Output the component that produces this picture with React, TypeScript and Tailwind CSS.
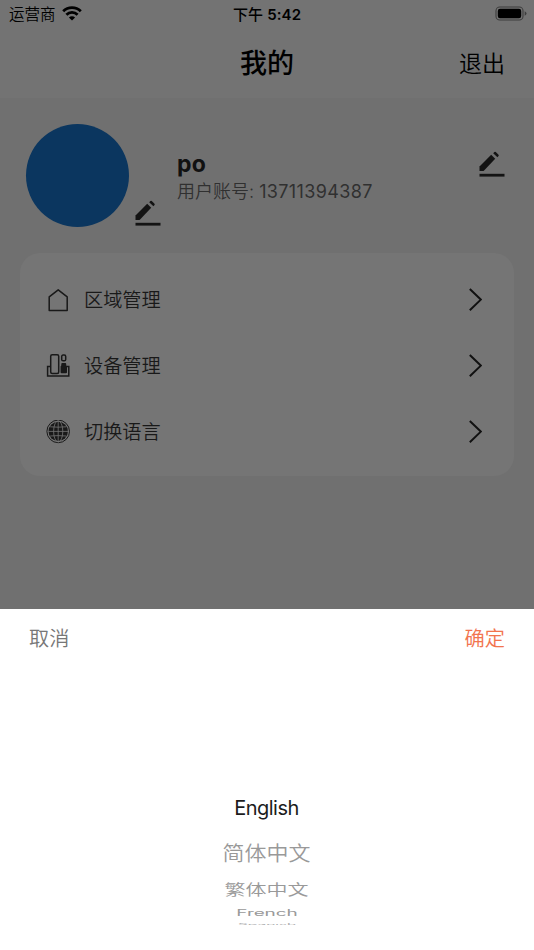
import React from 'react';

const languages = [
  { label: 'English', box: 'h-[46px]', text: 'text-[20px] text-[#1c1c1c] tracking-[-0.5px] -ml-px' },
  { label: '简体中文', box: 'h-[43px]', text: 'text-[22px] text-[#999] font-[350] scale-y-[0.94] -ml-px' },
  { label: '繁体中文', box: 'h-[30px]', text: 'text-[21px] text-[#999] font-[350] scale-y-[0.7] -ml-px' },
  { label: 'French', box: 'h-[19px]', text: 'text-[19px] text-[#999] tracking-[-0.1px] scale-y-[0.44]' },
  { label: 'Spanish', box: 'h-[1px]', text: 'text-[16px] text-[#b0b0b0] tracking-[-0.3px] scale-y-[0.1]' },
];

const HomeIcon = () => (
  <svg width="24" height="24" viewBox="0 0 24 24" fill="none" stroke="#191919" strokeWidth="1.5" strokeLinejoin="round">
    <path d="M3.2 8.9 12.2 1.8l9 7.1v13.6h-18z" />
  </svg>
);

const DeviceIcon = () => (
  <svg width="24" height="24" viewBox="0 0 24 24" fill="none" stroke="#191919" strokeWidth="1.5">
    <path d="M4 12.5H1.6v9.6h21.2v-9.6h-2.4" />
    <rect x="4.7" y=".8" width="8" height="18.6" rx="1.5" />
    <rect x="15.7" y="1" width="4" height="5.8" rx="1.4" />
    <path d="M16.2 9h3.1q.9 0 .9 1v1q0 .8.8 1.3v6q0 1-1 1h-4.4q-1 0-1-1v-6q.7-.4.7-1.3v-1q0-1 .9-1z" fill="#191919" stroke="none" />
  </svg>
);

const GlobeIcon = () => (
  <svg width="24" height="24" viewBox="0 0 24 24" fill="none">
    <circle cx="12.2" cy="11.4" r="11.3" stroke="#191919" strokeWidth="1" />
    <circle cx="12.2" cy="11.4" r="9.7" fill="#191919" />
    <g stroke="#757575" strokeWidth=".8">
      <path d="M12.2 1.4v20M2.2 11.4h20M4.2 6.8q8 .8 16 0M4.2 16q8-.8 16 0" />
      <ellipse cx="12.2" cy="11.4" rx="4.6" ry="10.6" />
    </g>
  </svg>
);

const EditIcon = () => (
  <svg width="26" height="26" viewBox="0 0 26 26" fill="#131313">
    <path d="M.5 20v-4.6L12.2 3.8l4 4L4.6 20z" />
    <path d="m14.2 2.3 1.2-1.3q.7-.7 1.4 0l2.7 2.7q.6.7 0 1.4L18.4 6.3z" />
    <path d="M.5 22.8h25v2.8H.5z" />
  </svg>
);

const menu = [
  { label: '区域管理', icon: <HomeIcon /> },
  { label: '设备管理', icon: <DeviceIcon /> },
  { label: '切换语言', icon: <GlobeIcon /> },
];

function StatusBar() {
  return (
    <div className="grid h-7 grid-cols-3 items-center pl-[9px] pr-[7px] text-black">
      <div className="flex items-center gap-[6px] text-[15.5px] leading-7">
        <span className="pt-px font-[350]">运营商</span>
        <svg className="-mt-[2px]" width="20" height="15" viewBox="0 0 20 15" fill="none" stroke="#000" strokeWidth="2.8">
          <path d="M1.2 5.3a12.5 12.5 0 0 1 17.6 0" />
          <path d="M4.4 8.7a8 8 0 0 1 11.2 0" />
          <path d="M10 14.6 6.9 11.5a4.4 4.4 0 0 1 6.2 0z" fill="#000" stroke="none" />
        </svg>
      </div>
      <div className="-ml-[2px] -mt-px whitespace-nowrap text-center text-[15px] leading-[27px] tracking-[0.05px]">
        <span className="font-medium">下午</span> <span className="font-semibold">5:42</span>
      </div>
      <svg className="-mt-[2px] justify-self-end" width="32" height="15" viewBox="0 0 32 15">
        <rect x="1" y="1" width="27" height="13" rx="3.8" fill="none" stroke="#3d3d3d" strokeWidth="1.1" />
        <rect x="2.8" y="2.8" width="23.4" height="9.4" rx="2.2" />
        <path d="M29.7 5.3q1.8.8 1.8 2.2t-1.8 2.2z" fill="#3d3d3d" />
      </svg>
    </div>
  );
}

export default function App() {
  return (
    <div className="flex h-[950px] w-[534px] flex-col overflow-hidden bg-[#707070] font-[Inter,'Noto_Sans_CJK_SC',sans-serif]">
      <header className="h-[98px] bg-[#737373]">
        <StatusBar />
        <div className="grid h-[70px] grid-cols-3 items-center px-[29px] pt-[2px] text-black">
          <h1 className="col-start-2 pt-px text-center text-[27px] font-medium">我的</h1>
          <button className="justify-self-end text-[23px] font-[350]">退出</button>
        </div>
      </header>

      <main className="h-[511px] px-5 pt-[26px]">
        <section className="flex h-[129px] pl-[6px] pr-[9px]">
          <div className="h-[103px] w-[103px] rounded-full bg-[#0b365f]" />
          <div className="ml-[6px] mt-[76px]">
            <EditIcon />
          </div>
          <div className="ml-4 flex-1 pt-[26px]">
            <h2 className="text-[23px] font-bold leading-[28px] tracking-[0.3px] text-[#111]">po</h2>
            <p className="text-[18px] font-[350] leading-7 text-[#303030]">
              用户账号: <span className="font-normal tracking-[0.36px]">13711394387</span>
            </p>
          </div>
          <div className="mt-[27px]">
            <EditIcon />
          </div>
        </section>

        <nav className="h-[223px] rounded-[20px] bg-[#757575] pl-[26px] pr-[32px] pt-[14px]">
          {menu.map((item) => (
            <div key={item.label} className="flex h-[66px] items-center">
              {item.icon}
              <span className="ml-[14px] flex-1 text-[19.2px] font-[350] text-[#191919]">{item.label}</span>
              <svg width="14" height="24" viewBox="0 0 14 24" fill="none" stroke="#111" strokeWidth="2">
                <path d="m1.8 1 11 10.6-11 10.6" />
              </svg>
            </div>
          ))}
        </nav>
      </main>

      <div className="flex-1 bg-white">
        <div className="flex h-[60px] items-center justify-between px-[29px] text-[20.2px] font-[350]">
          <button className="text-[#777]">取消</button>
          <button className="text-[#f2744e]">确定</button>
        </div>
        <div className="flex flex-col items-center pt-[116px]">
          {languages.map((lang) => (
            <div key={lang.label} className={`flex items-center justify-center ${lang.box}`}>
              <span className={`leading-none ${lang.text}`}>{lang.label}</span>
            </div>
          ))}
        </div>
      </div>
    </div>
  );
}
